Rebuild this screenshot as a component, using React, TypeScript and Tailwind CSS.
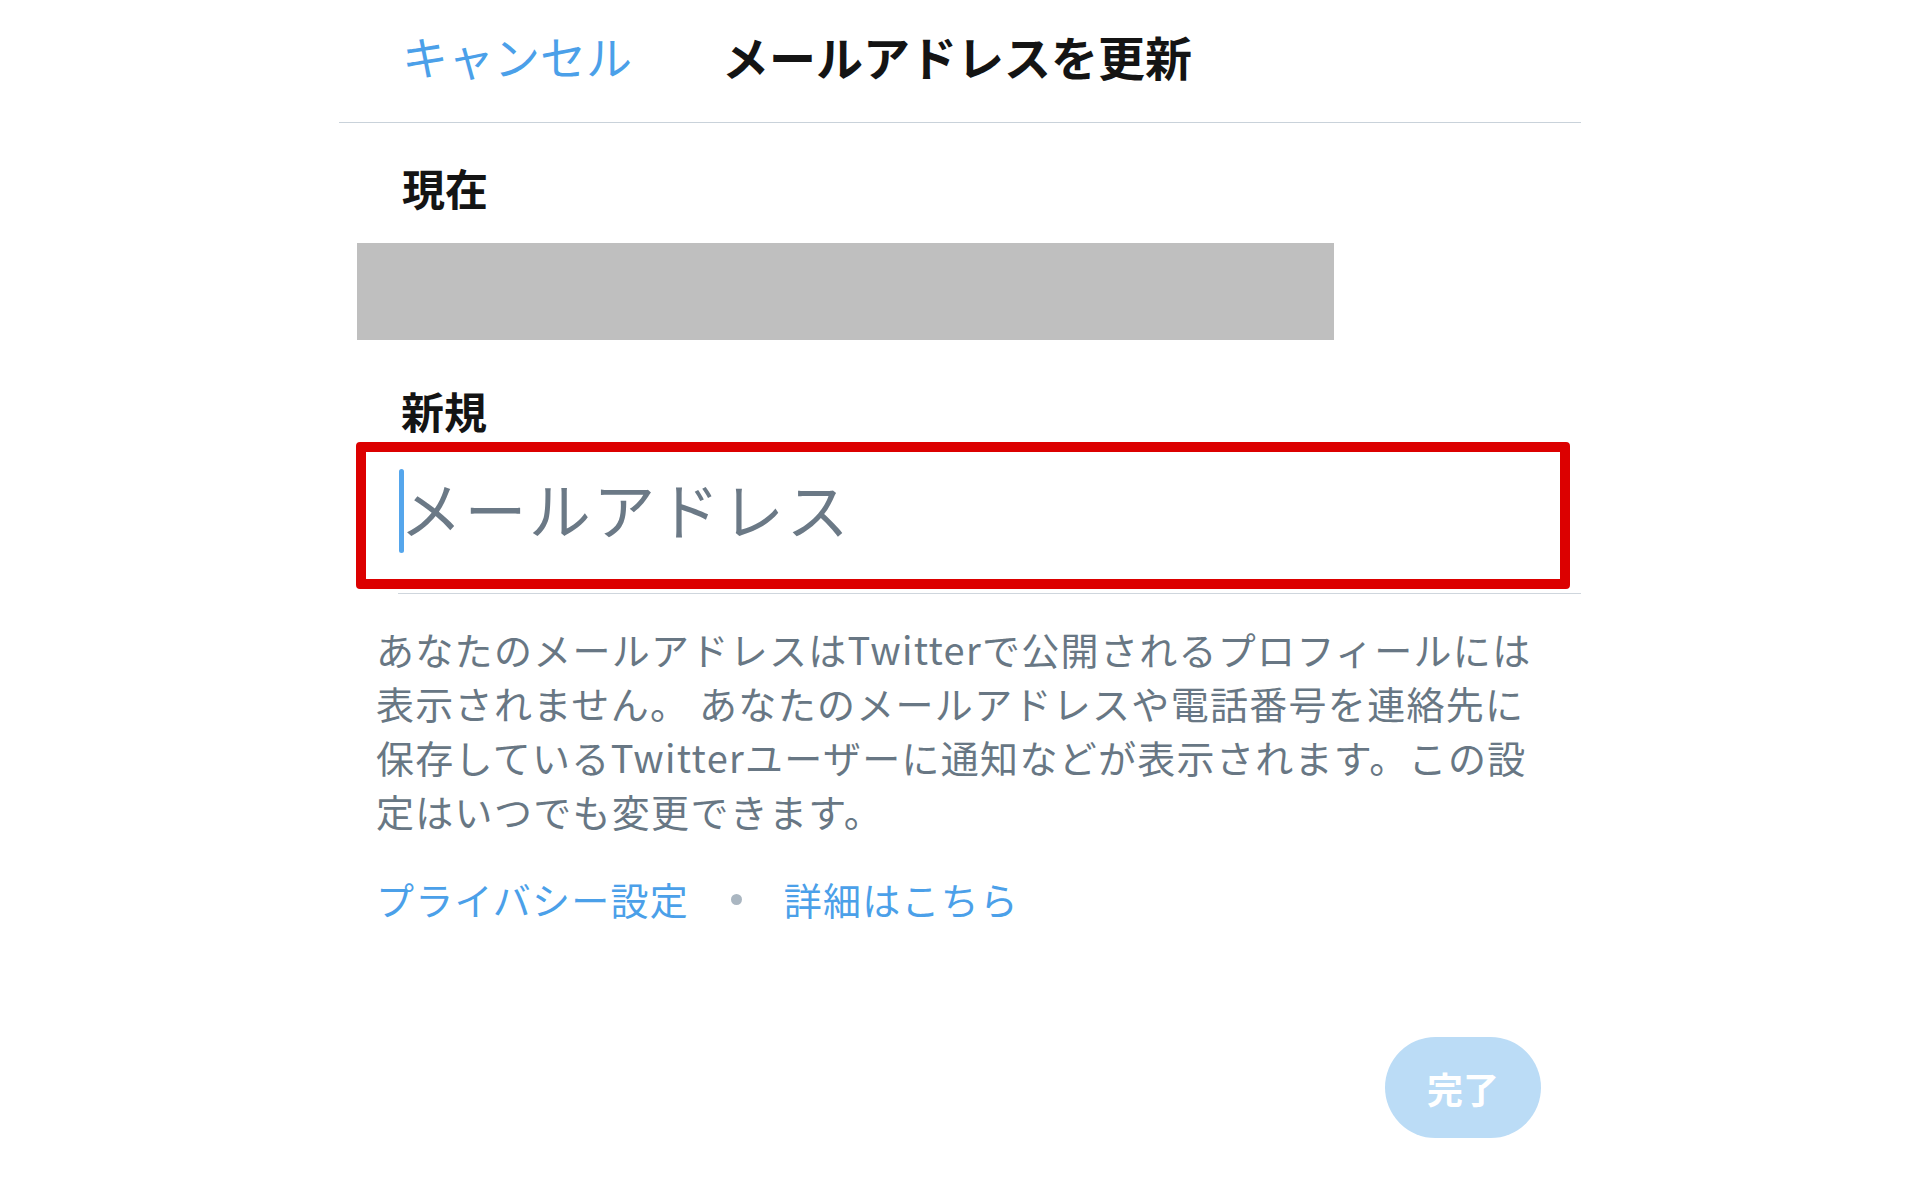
import React from "react";

const font = { fontFamily: '"Noto Sans CJK JP", "Noto Sans", sans-serif' };

export default function App() {
  return (
    <div className="min-h-screen bg-white" style={font}>
      <div className="mx-auto w-[1242px]">
        {/* header */}
        <div className="flex h-[123px] items-center border-b border-[#c9d2da] pb-[12px] pl-[63px]">
          <button className="text-[46px] leading-[47px] text-[#4ba0e9]">キャンセル</button>
          <h1 className="ml-[90px] text-[47px] font-bold leading-[47px] text-[#141414]">
            メールアドレスを更新
          </h1>
        </div>

        {/* current */}
        <div className="pl-[63px] pt-[43px] text-[43px] font-bold leading-[43px] text-[#141414]">現在</div>
        <div className="ml-[18px] mt-[34px] h-[97px] w-[977px] bg-[#bfbfbf]" />

        {/* new */}
        <div className="mt-[49px] pl-[62px] text-[43px] font-bold leading-[43px] text-[#141414]">新規</div>
        <div className="relative ml-[59px] mt-[8px] flex h-[154px] items-start border-b border-[#cfd6dd]">
          <span className="ml-[1px] mt-[29px] h-[84px] w-[5px] rounded-full bg-[#55a6ec]" />
          <span className="-ml-[4px] mt-[29px] text-[62px] leading-[78px] tracking-[2.4px] text-[#6b7986]">
            メールアドレス
          </span>
          <div className="pointer-events-none absolute -left-[42px] right-[11px] top-[2px] bottom-[4px] rounded-[4px] border-[10px] border-[#dc0000]" />
        </div>

        {/* description */}
        <p className="mt-[28px] whitespace-nowrap px-[37px] text-[38px] leading-[54px] tracking-[1.3px] text-[#687784]">
          あなたのメールアドレスはTwitterで公開されるプロフィールには
          <br />
          表示されません。 あなたのメールアドレスや電話番号を連絡先に
          <br />
          保存しているTwitterユーザーに通知などが表示されます。この設
          <br />
          定はいつでも変更できます。
        </p>

        <div className="mt-[34px] flex items-center pl-[37px] text-[38px] leading-[54px] tracking-[1.2px] text-[#4ba0e9]">
          <a>プライバシー設定</a>
          <span className="mx-[42px] h-[11px] w-[11px] rounded-full bg-[#aab6c1]" />
          <a>詳細はこちら</a>
        </div>

        <div className="mt-[111px] flex justify-end pr-[40px]">
          <button className="flex h-[101px] w-[156px] items-center justify-center rounded-full bg-[#bbdcf6] text-[36px] font-bold text-white">
            完了
          </button>
        </div>
      </div>
    </div>
  );
}
